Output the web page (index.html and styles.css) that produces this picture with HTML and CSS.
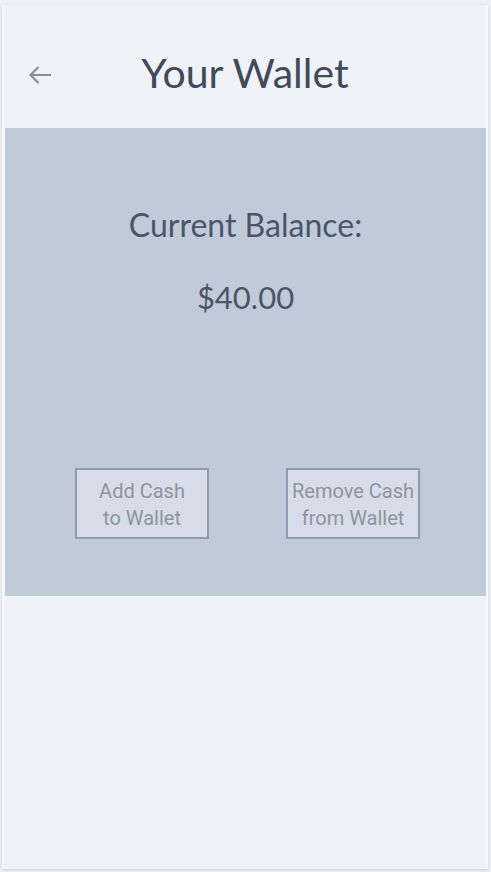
FILE: index.html
```html
<!DOCTYPE html>
<html>
<head>
<meta charset="utf-8">
<link rel="stylesheet" href="styles.css">
</head>
<body>
<div class="card">
  <header class="top">
    <button class="back" aria-label="Back">
      <svg width="24" height="24" viewBox="0 0 24 24"><path d="M23 12H2.5M10.5 4l-8 8 8 8" fill="none" stroke="#8b8d91" stroke-width="2.2"/></svg>
    </button>
    <h1 class="title">Your Wallet</h1>
  </header>
  <section class="panel">
    <div class="label">Current Balance:</div>
    <div class="amount">$40.00</div>
    <div class="actions">
      <button class="btn">Add Cash<br>to Wallet</button>
      <button class="btn">Remove Cash<br>from Wallet</button>
    </div>
  </section>
</div>
</body>
</html>
```
FILE: styles.css
```css
html, body {
  margin: 0;
  padding: 0;
  background: #eef1f6;
}
body {
  padding: 5px 3px 3px 2px;
  box-sizing: border-box;
  height: 872px;
}
.card {
  height: 864px;
  background: #eff2f7;
  border-left: 2px solid #f6f8fb;
  border-right: 2px solid #f6f8fb;
  box-shadow: 0 1px 3px rgba(150, 165, 190, 0.45);
  box-sizing: border-box;
  display: flex;
  flex-direction: column;
}
.top {
  height: 123px;
  flex: none;
  position: relative;
  display: flex;
  align-items: center;
  justify-content: center;
}
.back {
  position: absolute;
  left: 24px;
  top: 58px;
  border: 0;
  background: none;
  padding: 0;
  width: 24px;
  height: 24px;
}
.title {
  margin: 0;
  padding-top: 12px;
  font-family: Lato, "Noto Sans", sans-serif;
  font-weight: 400;
  font-size: 41px;
  color: #3f4a5a;
}
.panel {
  margin-left: 1px;
  height: 468px;
  flex: none;
  background: #c0cbd9;
  display: flex;
  flex-direction: column;
  align-items: center;
  font-family: Lato, "Noto Sans", sans-serif;
  color: #4a5567;
}
.label {
  margin-top: 77px;
  font-size: 32px;
  line-height: 40px;
}
.amount {
  margin-top: 32px;
  font-size: 31px;
  line-height: 40px;
}
.actions {
  margin-top: 151px;
  align-self: stretch;
  display: flex;
  padding-left: 70px;
  gap: 77px;
}
.btn {
  width: 134px;
  height: 71px;
  box-sizing: border-box;
  background: #d6dde8;
  border: 2px solid #8f9cb0;
  font-family: Roboto, "Liberation Sans", sans-serif;
  font-size: 20px;
  line-height: 27px;
  color: #8c95a2;
  padding: 3px 0 0;
  text-align: center;
}
```
